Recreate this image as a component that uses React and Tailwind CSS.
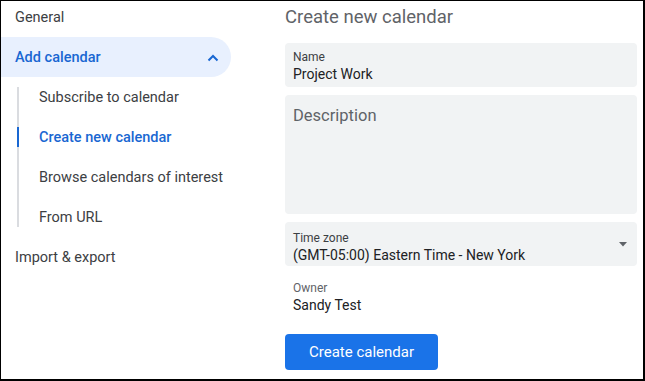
const subItems = [
    { label: "Subscribe to calendar" },
    { label: "Create new calendar", active: true },
    { label: "Browse calendars of interest" },
    { label: "From URL" },
];

const Sidebar = () => (
    <div className="w-[284px] shrink-0 flex flex-col text-[14.5px] text-[#3c4043]">
        <div className="h-[36px] flex items-center pl-[14px] pb-[2px]">General</div>
        <div className="h-[40px] w-[230px] flex items-center justify-between pl-[14px] pr-[12px] pt-[2px] bg-[#e8f0fe] rounded-r-full text-[#1967d2] font-medium">
            <span>Add calendar</span>
            <svg width="12" height="8" viewBox="0 0 12 8" fill="none">
                <path d="M1.5 6.5 L6 2 L10.5 6.5" stroke="#1967d2" strokeWidth="2" />
            </svg>
        </div>
        <div className="ml-[16px] my-[10px] border-l-2 border-[#dadce0]">
            <div className="-my-[10px] flex flex-col">
                {subItems.map((item) =>
                    item.active ? (
                        <div key={item.label} className="h-[40px] flex items-center -ml-[2px] text-[#1967d2] font-medium">
                            <span className="w-[2px] h-[20px] bg-[#1967d2]" />
                            <span className="pl-[20px] pt-[2px]">{item.label}</span>
                        </div>
                    ) : (
                        <div key={item.label} className="h-[40px] flex items-center pl-[20px] pt-[2px]">
                            {item.label}
                        </div>
                    )
                )}
            </div>
        </div>
        <div className="h-[40px] flex items-center pl-[14px] pt-[2px]">Import &amp; export</div>
    </div>
);

const App = () => {
    return (
        <div className="w-[645px] h-[381px] bg-white border-l border-t border-r-2 border-b-2 border-black flex overflow-hidden font-['Roboto','Liberation_Sans',sans-serif]">
            <Sidebar />
            <div className="flex-1 flex flex-col pr-[6px] text-[#3c4043]">
                <h1 className="mt-[4px] text-[18.5px] leading-[24px] text-[#5f6368]">Create new calendar</h1>

                <div className="mt-[14px] h-[44px] rounded-[4px] bg-[#f1f3f4] px-[8px] pt-[6px]">
                    <div className="text-[12px] leading-[16px] text-[#3c4043]">Name</div>
                    <div className="text-[14px] leading-[18px] text-[#202124]">Project Work</div>
                </div>

                <div className="mt-[8px] h-[119px] rounded-[4px] bg-[#f1f3f4] px-[8px] pt-[9px]">
                    <div className="text-[16.5px] leading-[24px] text-[#5f6368]">Description</div>
                </div>

                <div className="mt-[8px] h-[44px] rounded-[4px] bg-[#f1f3f4] pl-[8px] pr-[10px] flex items-center justify-between">
                    <div className="pt-[5px]">
                        <div className="text-[12px] leading-[16px] text-[#3c4043]">Time zone</div>
                        <div className="text-[14px] leading-[18px] text-[#202124]">(GMT-05:00) Eastern Time - New York</div>
                    </div>
                    <svg width="8" height="5" viewBox="0 0 8 5">
                        <path d="M0 0 H8 L4 4.5 Z" fill="#5f6368" />
                    </svg>
                </div>

                <div className="mt-[14px] px-[8px]">
                    <div className="text-[12px] leading-[16px] text-[#5f6368]">Owner</div>
                    <div className="text-[14px] leading-[18px] text-[#202124]">Sandy Test</div>
                </div>

                <button className="mt-[20px] w-[153px] h-[36px] rounded-[4px] bg-[#1a73e8] text-white text-[15px]">
                    Create calendar
                </button>
            </div>
        </div>
    );
};

export default App;
